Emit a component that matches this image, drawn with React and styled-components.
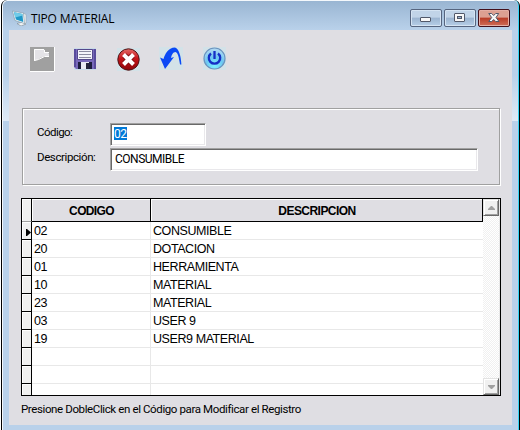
import React from "react";
import styled, { createGlobalStyle, css } from "styled-components";

const Global = createGlobalStyle`
  * { box-sizing: border-box; }
  html, body { margin: 0; padding: 0; overflow: hidden; background: #fff; }
  body { font-family: "Liberation Sans", Arial, sans-serif; color: #000; }
`;

const Window = styled.div`
  width: 519px;
  height: 430px;
  border: solid #000;
  border-width: 0 1px;
  border-radius: 6px 6px 0 0;
  background: #b9d1ea;
  box-shadow: inset 1px 1px 0 #f4f8fc, inset -1px 0 0 #35d5f5;
  display: flex;
  flex-direction: column;
  overflow: hidden;
`;

const Shell = styled.div`
  width: 520px;
  height: 430px;
  padding-left: 1px;
  display: flex;
`;

const TitleBar = styled.header`
  height: 29px;
  margin: 1px 1px 0;
  flex: none;
  padding: 0 8px 0 9px;
  display: flex;
  align-items: flex-start;
  background: linear-gradient(#99b5d2, #b9d1ea);
  border-radius: 5px 5px 0 0;
`;

const Title = styled.h1`
  flex: 1;
  margin: 0 0 0 3px;
  font: 400 12px/17px "Open Sans", "Noto Sans", sans-serif;
  letter-spacing: ${(p) => p.$spacing}px;
  padding-top: 9px;
  white-space: nowrap;
`;

const AppIcon = styled.svg`
  width: 16px;
  height: 16px;
  margin-top: 9px;
`;

const CaptionButtons = styled.div`
  display: flex;
  gap: 2px;
  padding-top: 8px;
`;

const CaptionButton = styled.button`
  width: 32px;
  height: 18px;
  padding: 0;
  display: flex;
  align-items: center;
  justify-content: center;
  border: 1px solid #56657f;
  border-radius: 2px;
  background: linear-gradient(#c1d4e8 0 45%, #9bb4d0 50%, #b7cfe8);
  box-shadow: inset 0 0 0 1px #d5e4f3;
  ${(p) =>
    p.$danger &&
    css`
      border-color: #43101b;
      background: linear-gradient(#dda092 0 45%, #b93c27 50%, #cf6e58);
      box-shadow: inset 0 0 0 1px #e5afa5;
    `}
`;

const Body = styled.div`
  display: flex;
  flex: none;
  height: 395px;
  padding: 0 1px;
`;

const Edge = styled.div`
  width: 6px;
  background: linear-gradient(#b9d1ea 0 45px, #dfeaf6 91px, #b9d1ea 91px);
`;

const Client = styled.main`
  width: 503px;
  background: #dfdee3;
  padding: 17px 0 0 12px;
`;

const Toolbar = styled.nav`
  display: flex;
  align-items: center;
  height: 25px;
  padding-left: 9px;
  gap: 18px;
`;

const ToolButton = styled.button`
  width: 25px;
  height: 25px;
  padding: ${(p) => (p.$flush ? 0 : 1)}px 0 0 ${(p) => p.$inset || 0}px;
  border: 0;
  background: none;
  display: flex;
  align-items: flex-start;
`;

const Group = styled.form`
  width: 478px;
  height: 77px;
  margin: 36px 0 0 1px;
  border: 1px solid #a0a0a0;
  box-shadow: inset 1px 1px 0 #fff, 1px 1px 0 #fff;
  padding: 14px 0 0 14px;
  display: flex;
  flex-direction: column;
  gap: 2px;
`;

const Field = styled.label`
  display: grid;
  grid-template-columns: 73px auto;
  justify-content: start;
`;

const Label = styled.span`
  font-family: Roboto, "Liberation Sans", sans-serif;
  font-size: 11.5px;
  line-height: 19px;
  letter-spacing: ${(p) => p.$spacing}px;
  white-space: nowrap;
`;

const Input = styled.span`
  display: block;
  width: ${(p) => p.$width}px;
  height: 23px;
  background: #fff;
  border: 1px solid;
  border-color: #a0a0a0 #fff #fff #a0a0a0;
  box-shadow: inset 1px 1px 0 #696969, inset -1px -1px 0 #e9e8eb;
  padding: 3px 0 0 ${(p) => p.$indent}px;
  font-family: Roboto, "Liberation Sans", sans-serif;
  font-size: 12px;
  line-height: 14px;
  letter-spacing: -0.5px;
  white-space: nowrap;
`;

const Selected = styled.mark`
  display: block;
  width: 13px;
  height: 13px;
  background: #0078d7;
  color: #fff;
`;

const Grid = styled.section`
  width: 480px;
  height: 198px;
  margin-top: 13px;
  border: 1px solid #000;
  background: #fff;
  display: flex;
`;

const Table = styled.div`
  width: 461px;
  height: 196px;
  overflow: hidden;
`;

const columns = css`
  display: grid;
  grid-template-columns: 10px 119px 332px;
`;

const HeadRow = styled.div`
  ${columns}
  height: 23px;
`;

const HeadCell = styled.div`
  height: 23px;
  background: ${(p) => (p.$stub ? "#f0f0f0" : "#dfdee3")};
  border-right: 1px solid #000;
  border-bottom: 1px solid ${(p) => (p.$stub ? "#a0a0a0" : "#000")};
  box-shadow: inset 1px 1px 0 #fff;
  padding-left: 1px;
  text-align: center;
  font-size: 12px;
  font-weight: 700;
  line-height: 24px;
  letter-spacing: ${(p) => p.$spacing || 0}px;
`;

const Row = styled.div`
  ${columns}
  height: 18px;
`;

const Stub = styled.div`
  background: #f0f0f0;
  border-right: 1px solid #000;
  border-bottom: 1px solid #000;
  box-shadow: inset 1px 1px 0 #fff;
  display: flex;
  align-items: center;
  justify-content: flex-end;
  svg { margin-top: 4px; }
`;

const Cell = styled.div`
  border-bottom: 1px solid #e8e8e8;
  border-right: ${(p) => (p.$last ? 0 : 1)}px solid #e8e8e8;
  padding-left: 2px;
  font-size: 12.5px;
  line-height: 19px;
  height: 18px;
  letter-spacing: -0.42px;
  white-space: nowrap;
`;

const ScrollBar = styled.div`
  width: 17px;
  display: flex;
  flex-direction: column;
  justify-content: space-between;
  background: repeating-conic-gradient(#f0f0f0 0 25%, #fff 0 50%) 0 0 / 2px 2px;
  border-right: 1px solid #e8e8e8;
`;

const ScrollButton = styled.button`
  width: 16px;
  height: 17px;
  padding: 0;
  display: flex;
  align-items: center;
  justify-content: center;
  background: #f0f0f0;
  border: 1px solid;
  border-color: #e3e3e3 #696969 #696969 #e3e3e3;
  box-shadow: inset 1px 1px 0 #fff, inset -1px -1px 0 #a0a0a0;
`;

const Hint = styled.p`
  margin: 6px 0 0;
  font-family: Roboto, "Liberation Sans", sans-serif;
  font-size: 11.5px;
  line-height: 14px;
  letter-spacing: -0.385px;
  white-space: nowrap;
`;

const rows = [
  ["02", "CONSUMIBLE"],
  ["20", "DOTACION"],
  ["01", "HERRAMIENTA"],
  ["10", "MATERIAL"],
  ["23", "MATERIAL"],
  ["03", "USER 9"],
  ["19", "USER9 MATERIAL"],
  ["", ""],
  ["", ""],
  ["", ""],
];

const MonitorIcon = () => (
  <AppIcon viewBox="0 0 16 16">
    <path d="M5 13.500l6-1.500 3 2-5 2z" fill="#f0f3f5" stroke="#7b8790" strokeWidth=".6" />
    <path d="M11 3l3 1.500v8.500l-2 1z" fill="#eef3f5" stroke="#8b9aa5" strokeWidth=".5" />
    <path d="M.5 1l11 2 1 10.500-9.500-3z" fill="#f5fafc" stroke="#7b93a3" strokeWidth=".6" />
    <path d="M2 2.300l8.400 1.700.8 8-7.300-2.500z" fill="#2098c8" />
    <path d="M2 2.300l8.400 1.700.2 1.500-7.500 2z" fill="#6fcbe8" />
  </AppIcon>
);

const NewIcon = () => (
  <svg width="25" height="25" viewBox="0 0 25 25">
    <path d="M0 0h25v25H0z" fill="#a0a0a0" />
    <path d="M4 2h10l1 3 4 1.500V9h-4l-5 2-1 1-5 2z" fill="#e4e3e7" />
    <path d="M4.500 14V2.500H14M4.500 13.500l4-1 6-3H19M14.500 3v2.500H19M24.500 0v24.500H0" fill="none" stroke="#fff" />
  </svg>
);

const SaveIcon = () => (
  <svg width="22" height="22" viewBox="0 0 22 22">
    <path d="M0 0h22v22H0z" fill="#c9dbe8" />
    <path d="M0 1h22v20H2l-2-2z" fill="#7869ba" />
    <path d="M0 1h2v18H0zM20 1h2v20h-2z" fill="#594b9c" />
    <path d="M3.500 1.500h15v10h-15z" fill="#f4f4fa" stroke="#54488c" />
    <path d="M5 3.500h12M5 6.500h12M5 9.500h12" stroke="#8c8ca0" />
    <path d="M4 14h14v7H4z" fill="#1d1d3e" />
    <path d="M7 14h8v7H7z" fill="#e9eaf3" />
    <path d="M12 15h3v6h-3z" fill="#25253c" />
  </svg>
);

const CancelIcon = () => (
  <svg width="23" height="23" viewBox="0 0 23 23">
    <defs>
      <linearGradient id="red" x2="0" y2="1">
        <stop stopColor="#e46a66" />
        <stop offset=".45" stopColor="#c5161b" />
        <stop offset="1" stopColor="#8c0509" />
      </linearGradient>
    </defs>
    <path d="M0 0h23v23H0z" fill="#d3e2e8" />
    <circle cx="11.500" cy="11.500" r="10.700" fill="url(#red)" stroke="#4d1517" />
    <path d="M7.500 7.500l8 8m0-8l-8 8" stroke="#7c0b0e" strokeWidth="5.800" />
    <path d="M6.500 6.500l10 10m0-10l-10 10" stroke="#fff" strokeWidth="4" />
  </svg>
);

const UndoIcon = () => (
  <svg width="24" height="23" viewBox="0 0 24 23">
    <path d="M0 0h24v23H0z" fill="#d3e2e8" />
    <path d="M1 10.500L4.500 12C6 7 9 .8 16 .5c4 1.500 6 8.500 6.400 17H21C20 11 19 5.500 16.500 5c-2.500 0-4 3-4.500 6l3-1L6 22z" fill="#0b49f5" />
  </svg>
);

const PowerIcon = () => (
  <svg width="23" height="23" viewBox="0 0 23 23">
    <defs>
      <radialGradient id="blue" cx=".5" cy=".85" r=".85">
        <stop stopColor="#7cf2ff" />
        <stop offset=".5" stopColor="#6cc6f2" />
        <stop offset="1" stopColor="#b8daf2" />
      </radialGradient>
    </defs>
    <path d="M0 0h23v23H0z" fill="#d3e2e8" />
    <circle cx="11.500" cy="11.500" r="10.500" fill="url(#blue)" stroke="#6b94bf" strokeWidth="1.200" />
    <path d="M8 6.500a5.700 5.700 0 1 0 7 0M11.500 4v8" fill="none" stroke="#152fc5" strokeWidth="2.300" />
  </svg>
);

const glyph = { fill: "#f8f8f8", stroke: "#515869" };

export default function App() {
  return (
    <>
      <Global />
      <Shell>
        <Window>
          <TitleBar>
            <MonitorIcon />
            <Title $spacing={-0.2}>TIPO MATERIAL</Title>
            <CaptionButtons>
              <CaptionButton aria-label="Minimizar">
                <svg width="12" height="12"><rect x=".5" y="5.500" width="10" height="4" rx=".5" {...glyph} /></svg>
              </CaptionButton>
              <CaptionButton aria-label="Maximizar">
                <svg width="12" height="12">
                  <rect x=".5" y="1.500" width="10" height="8" rx=".5" {...glyph} />
                  <rect x="3.500" y="4.500" width="4" height="2" fill="#9bb4d0" stroke="#515869" />
                </svg>
              </CaptionButton>
              <CaptionButton $danger aria-label="Cerrar">
                <svg width="12" height="12" viewBox="0 0 12 12">
                  <path d="M.7 1.500h3l2 2 2-2h3L8 5.500l3 4H7.700l-2-2-2 2h-3l3-4z" {...glyph} />
                </svg>
              </CaptionButton>
            </CaptionButtons>
          </TitleBar>
          <Body>
            <Edge />
            <Client>
              <Toolbar>
                <ToolButton $flush><NewIcon /></ToolButton>
                <ToolButton $inset={1}><SaveIcon /></ToolButton>
                <ToolButton $inset={1}><CancelIcon /></ToolButton>
                <ToolButton $flush><UndoIcon /></ToolButton>
                <ToolButton $flush $inset={1}><PowerIcon /></ToolButton>
              </Toolbar>
              <Group>
                <Field>
                  <Label $spacing={-0.55}>Código:</Label>
                  <Input $width={96} $indent={3}><Selected>02</Selected></Input>
                </Field>
                <Field>
                  <Label $spacing={-0.4}>Descripción:</Label>
                  <Input $width={368} $indent={4}>CONSUMIBLE</Input>
                </Field>
              </Group>
              <Grid>
                <Table>
                  <HeadRow>
                    <HeadCell $stub />
                    <HeadCell $spacing={-0.65}>CODIGO</HeadCell>
                    <HeadCell $spacing={-0.55}>DESCRIPCION</HeadCell>
                  </HeadRow>
                  {rows.map(([code, name], i) => (
                    <Row key={i}>
                      <Stub>
                        {i === 0 && <svg width="5" height="7"><path d="M0 0h1l4 3.500L1 7H0z" /></svg>}
                      </Stub>
                      <Cell>{code}</Cell>
                      <Cell $last>{name}</Cell>
                    </Row>
                  ))}
                </Table>
                <ScrollBar>
                  <ScrollButton><svg width="7" height="4"><path d="M3 0h1l3 3v1H0V3z" fill="#a0a0a0" /></svg></ScrollButton>
                  <ScrollButton><svg width="7" height="4"><path d="M0 0h7v1L4 4H3L0 1z" fill="#a0a0a0" /></svg></ScrollButton>
                </ScrollBar>
              </Grid>
              <Hint>Presione DobleClick en el Código para Modificar el Registro</Hint>
            </Client>
            <Edge />
          </Body>
        </Window>
      </Shell>
    </>
  );
}
